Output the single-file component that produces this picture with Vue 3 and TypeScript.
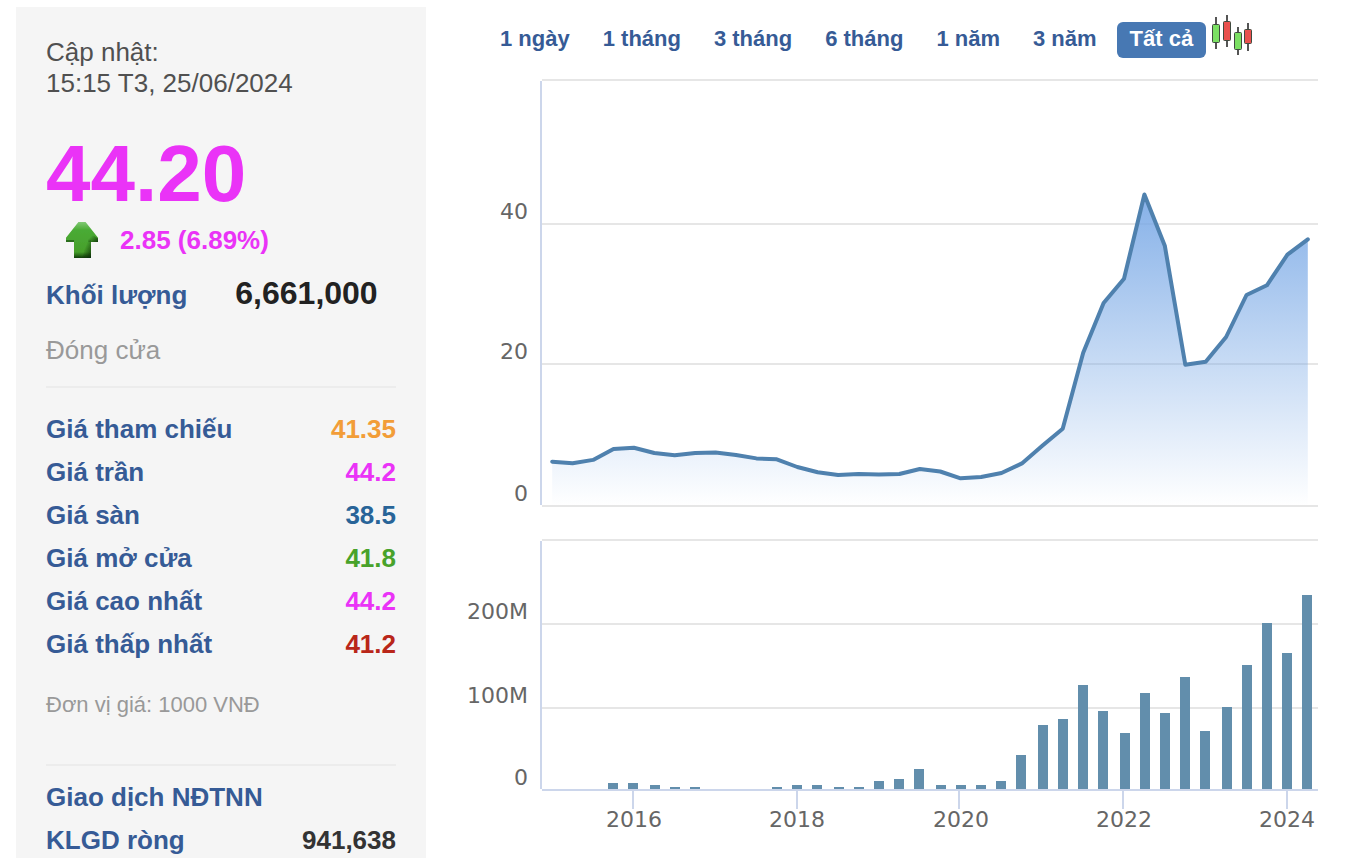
<script setup lang="ts">
import { computed, onBeforeUnmount, onMounted, ref } from 'vue'

interface Quote {
  label: string
  value: string
  tone: string
}

interface Tick {
  y: number
  label: string
}

const quotes: Quote[] = [
  { label: 'Giá tham chiếu', value: '41.35', tone: 'reference' },
  { label: 'Giá trần', value: '44.2', tone: 'ceiling' },
  { label: 'Giá sàn', value: '38.5', tone: 'floor' },
  { label: 'Giá mở cửa', value: '41.8', tone: 'up' },
  { label: 'Giá cao nhất', value: '44.2', tone: 'ceiling' },
  { label: 'Giá thấp nhất', value: '41.2', tone: 'down' },
]

const ranges: string[] = ['1 ngày', '1 tháng', '3 tháng', '6 tháng', '1 năm', '3 năm', 'Tất cả']
const activeRange = ref<string>('Tất cả')

// Quarterly series, starting with the first quarter of 2015
const prices: number[] = [
  6.24, 6.03, 6.5, 8.03, 8.21, 7.46, 7.14, 7.46, 7.52, 7.18, 6.7, 6.58, 5.49,
  4.75, 4.37, 4.51, 4.44, 4.51, 5.21, 4.86, 3.9, 4.08, 4.65, 6.0, 8.49, 10.89,
  21.59, 28.59, 32.01, 43.87, 36.66, 19.9, 20.32, 23.8, 29.72, 31.09, 35.39, 37.56,
]
const volumes: number[] = [
  0, 0, 0, 7, 7, 5, 2, 2, 0, 0, 0, 2, 5, 5, 2, 2, 10, 12, 24, 5, 5, 5, 10, 41,
  77, 84, 125, 94, 67, 116, 92, 135, 70, 99, 149, 200, 164, 234,
]

const plotLeft = 96
const priceBase = 436
const volumeBase = 719

const priceTicks: Tick[] = [
  { y: 10, label: '' },
  { y: 154, label: '40' },
  { y: 294, label: '20' },
  { y: 436, label: '0' },
]
const volumeTicks: Tick[] = [
  { y: 470, label: '' },
  { y: 554, label: '200M' },
  { y: 638, label: '100M' },
  { y: 720, label: '0' },
]

const chartBox = ref<HTMLElement | null>(null)
const chartWidth = ref<number>(872)
let observer: ResizeObserver | undefined

function measure(): void {
  if (chartBox.value) chartWidth.value = Math.max(320, chartBox.value.clientWidth)
}

onMounted(() => {
  measure()
  observer = new ResizeObserver(measure)
  if (chartBox.value) observer.observe(chartBox.value)
})
onBeforeUnmount(() => observer?.disconnect())

const step = computed<number>(() => (chartWidth.value - plotLeft) / prices.length)
const xAt = (index: number): number => plotLeft + (index + 0.5) * step.value

const linePoints = computed<string>(() =>
  prices.map((price, i) => `${xAt(i).toFixed(1)},${(priceBase - price * 7.1).toFixed(1)}`).join(' '),
)
const areaPoints = computed<string>(
  () =>
    `${xAt(0).toFixed(1)},${priceBase} ${linePoints.value} ${xAt(prices.length - 1).toFixed(1)},${priceBase}`,
)

const bars = computed(() =>
  volumes.map((volume, i) => {
    const height = Math.round((volume * 0.83) / 2) * 2
    return { x: Math.round((xAt(i) - 5) / 2) * 2, y: volumeBase - height, height }
  }),
)

const years = computed(() =>
  [2016, 2018, 2020, 2022, 2024].map((year, i) => {
    const x = xAt(4 + i * 8)
    return { year, x: Math.round(x), tick: Math.floor((x - 1) / 2) * 2 + 1 }
  }),
)
</script>

<template>
  <main class="page">
    <aside class="panel">
      <p class="updated">Cập nhật:<br />15:15 T3, 25/06/2024</p>
      <p class="price">44.20</p>
      <p class="change">
        <svg class="arrow" width="32" height="36" viewBox="0 0 32 36" aria-hidden="true">
          <defs>
            <linearGradient id="arrowFill" x1="0" y1="0" x2="0" y2="1">
              <stop offset="0" stop-color="#8fd084" />
              <stop offset="0.25" stop-color="#4aab35" />
              <stop offset="0.8" stop-color="#46a02b" />
              <stop offset="0.92" stop-color="#1c5210" />
              <stop offset="1" stop-color="#061503" />
            </linearGradient>
            <linearGradient id="arrowShade" x1="0" y1="0" x2="1" y2="1">
              <stop offset="0.35" stop-color="#0d3006" stop-opacity="0" />
              <stop offset="1" stop-color="#0d3006" stop-opacity="0.95" />
            </linearGradient>
            <filter id="arrowSoft" x="-10%" y="-10%" width="120%" height="120%">
              <feGaussianBlur stdDeviation="0.7" />
            </filter>
          </defs>
          <g filter="url(#arrowSoft)">
            <path d="M14 -2 H18 L33 17 V20 H25 V38 H8 V20 H-1 V17 Z" fill="url(#arrowFill)" />
            <path d="M22 10 L33 17 V20 H22 Z" fill="url(#arrowShade)" />
            <path d="M20 18 H25 V38 H16 Z" fill="url(#arrowShade)" />
            <path d="M-1 18 H8 V20 H-1 Z" fill="#2c6e1d" />
          </g>
        </svg>
        <span>2.85 (6.89%)</span>
      </p>
      <p class="volume">
        <span class="label">Khối lượng</span>
        <strong>6,661,000</strong>
      </p>
      <p class="status">Đóng cửa</p>
      <hr />
      <table class="quotes">
        <tbody>
          <tr v-for="quote in quotes" :key="quote.label">
            <th scope="row">{{ quote.label }}</th>
            <td :class="quote.tone">{{ quote.value }}</td>
          </tr>
        </tbody>
      </table>
      <p class="unit">Đơn vị giá: 1000 VNĐ</p>
      <hr class="wide" />
      <table class="quotes foreign">
        <tbody>
          <tr>
            <th scope="rowgroup" colspan="2">Giao dịch NĐTNN</th>
          </tr>
          <tr>
            <th scope="row">KLGD ròng</th>
            <td>941,638</td>
          </tr>
        </tbody>
      </table>
    </aside>

    <section class="charts">
      <div class="toolbar">
        <button
          v-for="range in ranges"
          :key="range"
          type="button"
          class="range"
          :class="{ active: range === activeRange }"
          :aria-pressed="range === activeRange"
          @click="activeRange = range"
        >
          {{ range }}
        </button>
        <button type="button" class="candles" aria-label="Biểu đồ nến">
          <svg width="42" height="44" viewBox="0 0 42 44" aria-hidden="true">
            <g stroke="#555" stroke-width="2">
              <path d="M3 3V35M14 1V33M25 13V41M35 9V37" />
            </g>
            <g stroke="#3f4a3f" stroke-width="1">
              <rect x="-0.5" y="10.5" width="7" height="18" rx="1" fill="#7be063" />
              <rect x="10.5" y="7.5" width="7" height="19" rx="1" fill="#e9514e" />
              <rect x="21.5" y="18.5" width="7" height="17" rx="1" fill="#7be063" />
              <rect x="31.5" y="15.5" width="7" height="14" rx="1" fill="#e9514e" />
            </g>
          </svg>
        </button>
      </div>

      <div ref="chartBox" class="chart">
        <svg :width="chartWidth" height="775" role="img" aria-label="Giá và khối lượng theo quý">
          <defs>
            <linearGradient id="areaFill" x1="0" y1="0" x2="0" y2="1">
              <stop offset="0" stop-color="#75a6e5" stop-opacity="0.88" />
              <stop offset="1" stop-color="#75a6e5" stop-opacity="0" />
            </linearGradient>
          </defs>

          <g class="grid">
            <line
              v-for="tick in priceTicks"
              :key="tick.y"
              :x1="plotLeft"
              :x2="chartWidth"
              :y1="tick.y"
              :y2="tick.y"
            />
            <line
              v-for="tick in volumeTicks"
              :key="tick.y"
              :x1="plotLeft"
              :x2="chartWidth"
              :y1="tick.y"
              :y2="tick.y"
            />
          </g>

          <polygon :points="areaPoints" fill="url(#areaFill)" />
          <polyline class="line" :points="linePoints" />

          <g class="bars">
            <rect
              v-for="(bar, i) in bars"
              :key="i"
              :x="bar.x"
              :y="bar.y"
              width="10"
              :height="bar.height"
            />
          </g>

          <g class="axis">
            <line :x1="plotLeft - 1" :x2="plotLeft - 1" y1="11" y2="435" />
            <line :x1="plotLeft - 1" :x2="plotLeft - 1" y1="471" y2="719" />
            <line :x1="plotLeft" :x2="chartWidth" y1="720" y2="720" />
            <line v-for="item in years" :key="item.year" :x1="item.tick" :x2="item.tick" y1="720" y2="739" />
          </g>

          <g class="labels">
            <text
              v-for="tick in [...priceTicks, ...volumeTicks]"
              :key="tick.y"
              :x="plotLeft - 14"
              :y="tick.y - 5"
              text-anchor="end"
            >
              {{ tick.label }}
            </text>
            <text v-for="item in years" :key="item.year" :x="item.x" y="757" text-anchor="middle">
              {{ item.year }}
            </text>
          </g>
        </svg>
      </div>
    </section>
  </main>
</template>

<style>
body {
  margin: 0;
  background: #fff;
}
</style>

<style scoped>
.page {
  display: flex;
  min-height: 100vh;
  font-family: 'Liberation Sans', Arial, sans-serif;
  font-size: 26px;
  line-height: 30px;
  color: #333;
}

.panel {
  box-sizing: border-box;
  flex: 0 0 410px;
  margin: 7px 0 0 16px;
  padding: 30px 30px 0;
  background: #f5f5f5;
}

.panel p {
  margin: 0;
}

.panel .updated {
  color: #505050;
  line-height: 31px;
}

.panel .price {
  margin-top: 35px;
  font-size: 80px;
  line-height: 80px;
  font-weight: 700;
  color: #ea33f7;
}

.panel .change {
  display: flex;
  align-items: center;
  gap: 22px;
  margin-top: 8px;
  padding-left: 20px;
  font-weight: 700;
  color: #ea33f7;
}

.arrow {
  display: block;
}

.panel .volume {
  display: flex;
  align-items: baseline;
  gap: 48px;
  margin-top: 17px;
}

.volume .label {
  font-weight: 700;
  color: #365b96;
}

.volume strong {
  font-size: 32px;
  line-height: 36px;
  color: #222;
}

.panel .status {
  margin-top: 24px;
  color: #999;
}

hr {
  height: 2px;
  margin: 21px 0 26px;
  border: 0;
  background: #ececec;
}

hr.wide {
  margin: 46px 0 16px;
}

.quotes {
  width: 100%;
  border-collapse: collapse;
}

.quotes th,
.quotes td {
  padding: 0 0 13px;
  font-weight: 700;
}

.quotes tr:last-child th,
.quotes tr:last-child td {
  padding-bottom: 0;
}

.quotes th {
  text-align: left;
  color: #365b96;
}

.quotes td {
  text-align: right;
  color: #333;
}

.quotes td.reference {
  color: #f29d38;
}

.quotes td.ceiling {
  color: #ea33f7;
}

.quotes td.floor {
  color: #286498;
}

.quotes td.up {
  color: #48a22a;
}

.quotes td.down {
  color: #b92619;
}

.panel .unit {
  margin-top: 33px;
  font-size: 22px;
  line-height: 26px;
  color: #999;
}

.charts {
  flex: 1;
  min-width: 0;
  padding: 14px 30px 0 20px;
}

.toolbar {
  display: flex;
  align-items: flex-end;
  gap: 7px;
  padding-left: 41px;
}

.range {
  padding: 5px 13px 7px;
  border: 0;
  border-radius: 6px;
  background: none;
  font: inherit;
  font-size: 22px;
  line-height: 24px;
  font-weight: 700;
  white-space: nowrap;
  color: #365b96;
  cursor: pointer;
}

.range.active {
  background: #4778b3;
  color: #fff;
}

.candles {
  padding: 0;
  border: 0;
  background: none;
  cursor: pointer;
}

.candles svg {
  display: block;
  overflow: visible;
}

.chart {
  margin-top: 12px;
  overflow: hidden;
}

.chart svg {
  display: block;
}

.grid line {
  stroke: #e6e6e6;
  stroke-width: 2;
}

.axis line {
  stroke: #ccd6eb;
  stroke-width: 2;
}

.line {
  fill: none;
  stroke: #4f81ae;
  stroke-width: 4;
  stroke-linejoin: round;
  stroke-linecap: round;
}

.bars rect {
  fill: #628eac;
}

.labels text {
  font-family: 'DejaVu Sans', sans-serif;
  font-size: 22px;
  fill: #666;
}
</style>
